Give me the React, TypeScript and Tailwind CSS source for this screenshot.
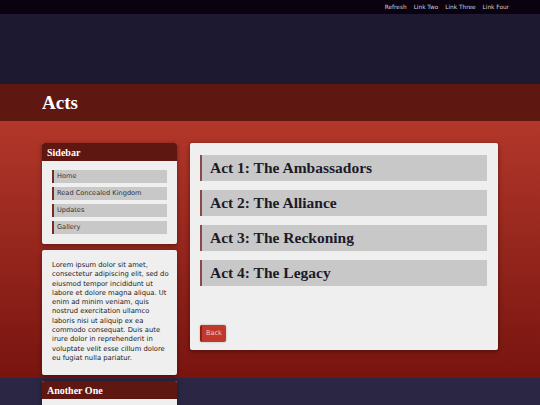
import React from "react";

const links = ["Refresh", "Link Two", "Link Three", "Link Four"];
const menu = ["Home", "Read Concealed Kingdom", "Updates", "Gallery"];
const acts = [
  "Act 1: The Ambassadors",
  "Act 2: The Alliance",
  "Act 3: The Reckoning",
  "Act 4: The Legacy",
];

const serif = "font-['Georgia','Liberation_Serif',serif]";
const sans = "font-['DejaVu_Sans','Verdana',sans-serif]";

const App = () => {
  return (
    <div className={`w-[540px] h-[405px] overflow-hidden bg-[#2a2644] ${sans}`}>
      <div className="h-[14px] bg-[#0b0210] flex items-center justify-end gap-[7px] pr-[31px]">
        {links.map((l) => (
          <a key={l} className="text-[5.8px] text-[#d4d0d6]">
            {l}
          </a>
        ))}
      </div>
      <div className="h-[70px] bg-[#1c1930]" />
      <div className="h-[37px] bg-[#5e1711] flex items-center pl-[42px] pt-[2px]">
        <h1 className={`${serif} text-white font-bold text-[19px]`}>Acts</h1>
      </div>
      <div className="h-[257px] bg-gradient-to-b from-[#b3372a] to-[#78140f] flex gap-[13px] pl-[42px] pt-[22px]">
        <div className="w-[135px] flex flex-col gap-[6px] shrink-0">
          <div className="shrink-0 rounded-[2px] bg-[#efefef] shadow-[0_1px_4px_rgba(0,0,0,0.4)] overflow-hidden">
            <div className={`${serif} h-[18px] bg-[#5e1711] text-white font-bold text-[10px] flex items-center px-[5px]`}>
              Sidebar
            </div>
            <ul className="flex flex-col gap-[4px] px-[10px] pt-[9px] pb-[10px]">
              {menu.map((m) => (
                <li
                  key={m}
                  className="h-[13px] bg-[#c8c8c8] border-l-2 border-[#7a2a25] text-[6.6px] text-[#333333] flex items-center pl-[3px]"
                >
                  {m}
                </li>
              ))}
            </ul>
          </div>
          <div className="shrink-0 rounded-[2px] bg-[#efefef] shadow-[0_1px_4px_rgba(0,0,0,0.4)] pl-[10px] pr-[8px] pt-[11px] pb-[12px]">
            <p className="text-[6.8px] leading-[9.3px] text-[#222222]">
              Lorem ipsum dolor sit amet, consectetur adipiscing elit, sed do eiusmod tempor incididunt ut labore et
              dolore magna aliqua. Ut enim ad minim veniam, quis nostrud exercitation ullamco laboris nisi ut aliquip
              ex ea commodo consequat. Duis aute irure dolor in reprehenderit in voluptate velit esse cillum dolore eu
              fugiat nulla pariatur.
            </p>
          </div>
          <div className="shrink-0 rounded-[2px] bg-[#efefef] shadow-[0_1px_4px_rgba(0,0,0,0.4)] overflow-hidden">
            <div className={`${serif} h-[18px] bg-[#5e1711] text-white font-bold text-[10px] flex items-center px-[5px]`}>
              Another One
            </div>
            <div className="h-[40px]" />
          </div>
        </div>
        <div className="w-[308px] h-[207px] shrink-0 rounded-[2px] bg-[#efefef] shadow-[0_1px_5px_rgba(0,0,0,0.45)] px-[10px] pt-[12px] flex flex-col">
          <ul className="flex flex-col gap-[9px] pr-[1px]">
            {acts.map((a) => (
              <li
                key={a}
                className={`${serif} h-[26px] bg-[#c8c8c8] border-l-2 border-[#8a4a45] flex items-center pl-[8px] text-[15.5px] font-bold text-[#1c1a28]`}
              >
                {a}
              </li>
            ))}
          </ul>
          <button className="mt-[39px] self-start h-[17px] px-[4px] rounded-[2px] bg-[#c0392b] border-l-2 border-[#8a1f16] text-[6.5px] text-[#f4c8bc] shadow-[0_0_2px_rgba(0,0,0,0.3)]">
            Back
          </button>
        </div>
      </div>
    </div>
  );
};

export default App;
